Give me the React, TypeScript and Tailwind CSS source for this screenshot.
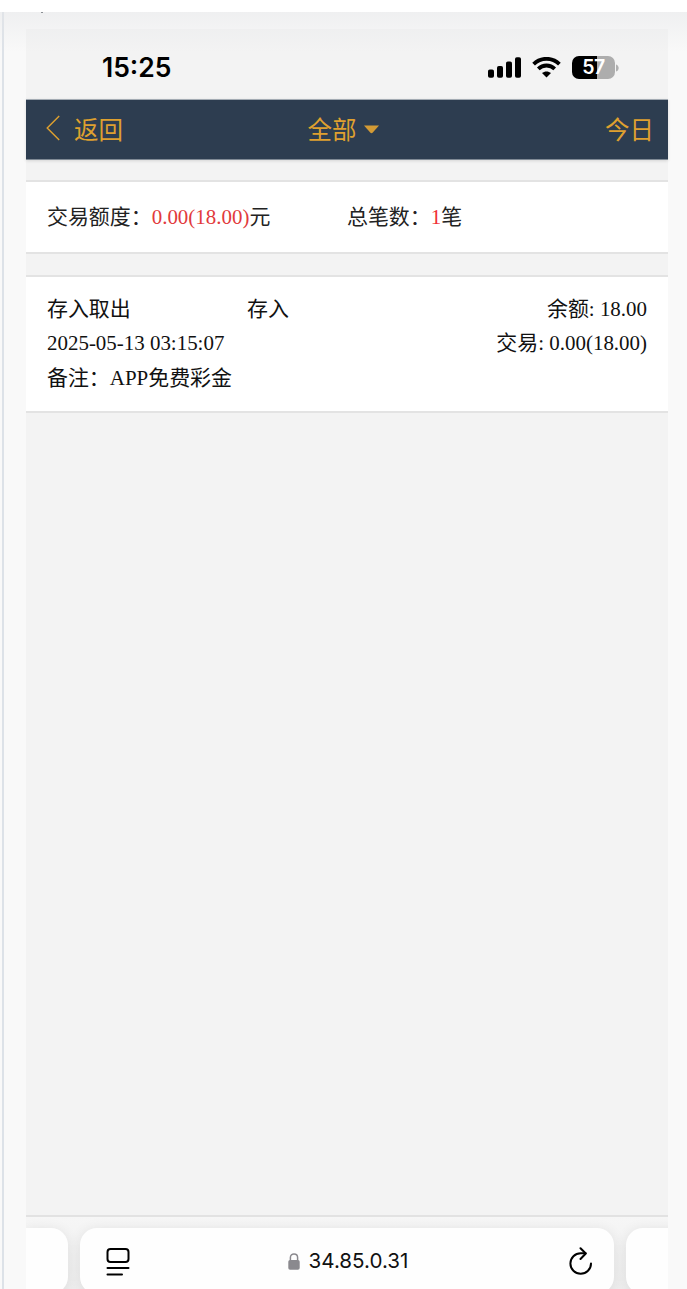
import React from 'react';

interface RecordItem {
    category: string;
    type: string;
    time: string;
    balance: string;
    amount: string;
    remark: string;
}

const RECORDS: RecordItem[] = [
    {
        category: '存入取出',
        type: '存入',
        time: '2025-05-13 03:15:07',
        balance: '18.00',
        amount: '0.00(18.00)',
        remark: 'APP免费彩金',
    },
];

const StatusBar: React.FC = () => (
    <div className="h-[70px] pt-[7px] pl-[76px] pr-[49px] flex items-center justify-between text-black font-['Inter',sans-serif]">
        <span className="text-[26.5px] font-semibold leading-none">15:25</span>
        <div className="flex items-center">
            <svg width="33" height="21" viewBox="0 0 33 21" fill="currentColor">
                <rect x="0" y="12.5" width="6" height="8.3" rx="1.8" />
                <rect x="9" y="9" width="6" height="11.8" rx="1.8" />
                <rect x="18" y="4.5" width="6" height="16.3" rx="1.8" />
                <rect x="27" y="0.3" width="6" height="20.5" rx="1.8" />
            </svg>
            <svg className="ml-[11px]" width="29" height="21" viewBox="0 0 29 21" fill="none" stroke="currentColor" strokeWidth="3.8">
                <path d="M1.6 7.1 C8.7 0 20.3 0 27.4 7.1" />
                <path d="M6.3 11.8 C10.9 7.4 18.1 7.4 22.7 11.8" />
                <path d="M14.5 20.6 L10 16.1 C12.5 13.8 16.5 13.8 19 16.1 Z" fill="currentColor" stroke="none" />
            </svg>
            <div className="ml-[11px] w-[43px] h-[23px] rounded-[7px] overflow-hidden bg-[linear-gradient(to_right,#000_57%,#adadad_57%)] flex items-center justify-center">
                <span className="pt-px text-white text-[19.5px] font-semibold leading-none tracking-[-0.5px]">57</span>
            </div>
            <svg className="ml-[1px]" width="3" height="8" viewBox="0 0 3 8">
                <path d="M0 0.5 C3.6 1.5 3.6 6.5 0 7.5 Z" fill="#b0b0b0" />
            </svg>
        </div>
    </div>
);

const NavBar: React.FC = () => (
    <div className="h-[61px] pl-5 pr-[14px] grid grid-cols-3 items-center bg-[#2d3d50] border-t border-b border-t-[#a3abb3] border-b-[#808a95] shadow-[0_1px_3px_rgba(0,0,0,0.12)] text-[#dfa02f] text-[24.5px] leading-none">
        <div className="flex items-center">
            <svg className="-mt-[3px]" width="14" height="26" viewBox="0 0 14 26" fill="none" stroke="currentColor" strokeWidth="1.4">
                <path d="M13.2 1 L1.2 13 L13.2 25" />
            </svg>
            <span className="ml-[14px] pt-[3px]">返回</span>
        </div>
        <div className="flex items-center justify-center pr-[13px]">
            <span className="pt-[3px]">全部</span>
            <svg className="ml-2" width="15" height="9" viewBox="0 0 15 9" fill="#d39b35">
                <path d="M0 0.5 H15 L8.8 7.6 Q7.5 9 6.2 7.6 Z" />
            </svg>
        </div>
        <div className="pt-[3px] text-right">今日</div>
    </div>
);

const Summary: React.FC = () => (
    <div className="mt-5 h-[74px] px-[21px] pt-px flex items-center bg-white border-y-2 border-[#e3e3e3] text-[#222]">
        <div className="w-[300px]">
            交易额度：<span className="text-[#e23a3c]">0.00(18.00)</span>元
        </div>
        <div>
            总笔数：<span className="text-[#f02f35]">1</span>笔
        </div>
    </div>
);

const RecordCard: React.FC<{ item: RecordItem }> = ({ item }) => (
    <div className="mt-[21px] h-[138px] px-[21px] pt-[14.5px] bg-white border-y-2 border-[#e3e3e3] text-[#111] leading-[34.5px]">
        <div className="flex">
            <span className="w-[200px]">{item.category}</span>
            <span>{item.type}</span>
            <span className="ml-auto">余额: {item.balance}</span>
        </div>
        <div className="flex justify-between">
            <span>{item.time}</span>
            <span>交易: {item.amount}</span>
        </div>
        <div>备注：{item.remark}</div>
    </div>
);

const BrowserBar: React.FC = () => (
    <div className="h-[74px] shrink-0 pt-[11px] flex gap-3 overflow-hidden border-t-2 border-[#e2e2e2] bg-[linear-gradient(to_bottom,#f6f6f6,#efefef)] font-['Inter',sans-serif]">
        <div className="w-[42px] h-[66px] shrink-0 rounded-r-[17px] bg-[#fefefe] shadow-[0_2px_14px_rgba(0,0,0,0.09)]" />
        <div className="w-[534px] h-[66px] shrink-0 px-[26px] pt-px rounded-[17px] bg-[#fefefe] shadow-[0_2px_14px_rgba(0,0,0,0.09)] flex items-center justify-between text-[#111]">
            <svg width="24" height="28" viewBox="0 0 24 28" fill="none" stroke="#000" strokeWidth="2" strokeLinecap="round">
                <rect x="1.5" y="1" width="21" height="13" rx="3" />
                <path d="M1.5 20 H22.5 M1.5 26.5 H16" />
            </svg>
            <div className="flex items-center gap-[9px] pr-[3px]">
                <svg width="12" height="17" viewBox="0 0 12 17" fill="none">
                    <path d="M2.4 8 V4.5 C2.4 -0.3 9.6 -0.3 9.6 4.5 V8" stroke="#8a898e" strokeWidth="1.5" />
                    <rect x="0.3" y="7" width="11.4" height="9.7" rx="1.8" fill="#8a898e" />
                </svg>
                <span className="text-[20.6px] leading-none">34.85.0.31</span>
            </div>
            <svg className="mr-[-5px] -mt-[2px]" width="24" height="28" viewBox="0 0 24 28" fill="none" stroke="#000" strokeWidth="2" strokeLinecap="round" strokeLinejoin="round">
                <path d="M22 16.5 A10.3 10.3 0 1 1 11.7 6.2 H16.5" />
                <path d="M11.5 1.2 L16.8 6.5 L11.5 12" />
            </svg>
        </div>
        <div className="w-[60px] h-[66px] shrink-0 rounded-l-[17px] bg-[#fefefe] shadow-[0_2px_14px_rgba(0,0,0,0.09)]" />
    </div>
);

const App: React.FC = () => {
    return (
        <div className="h-[1289px] w-[687px] pt-3 overflow-hidden bg-white">
            <div className="relative h-[1277px] flex pl-[2px] bg-[#f9f9f9]">
                <div className="w-[2px] mr-[22px] bg-[#dde2e8]" />
                <div className="w-[642px] mt-[17px] flex flex-col bg-[#f3f3f3] text-[20.95px] font-['Liberation_Serif','Noto_Sans_CJK_SC',serif]">
                    <StatusBar />
                    <NavBar />
                    <Summary />
                    {RECORDS.map(item => (
                        <RecordCard key={item.time} item={item} />
                    ))}
                    <div className="flex-1" />
                    <BrowserBar />
                </div>
                {/* Header fade over the top of the page */}
                <div className="absolute inset-x-0 top-0 h-10 bg-linear-to-b from-[#e5e6e8]/50 to-transparent" />
                <div className="absolute left-[41px] top-0 w-[2px] h-[1px] bg-[#8b8f94]" />
            </div>
        </div>
    );
};

export default App;
